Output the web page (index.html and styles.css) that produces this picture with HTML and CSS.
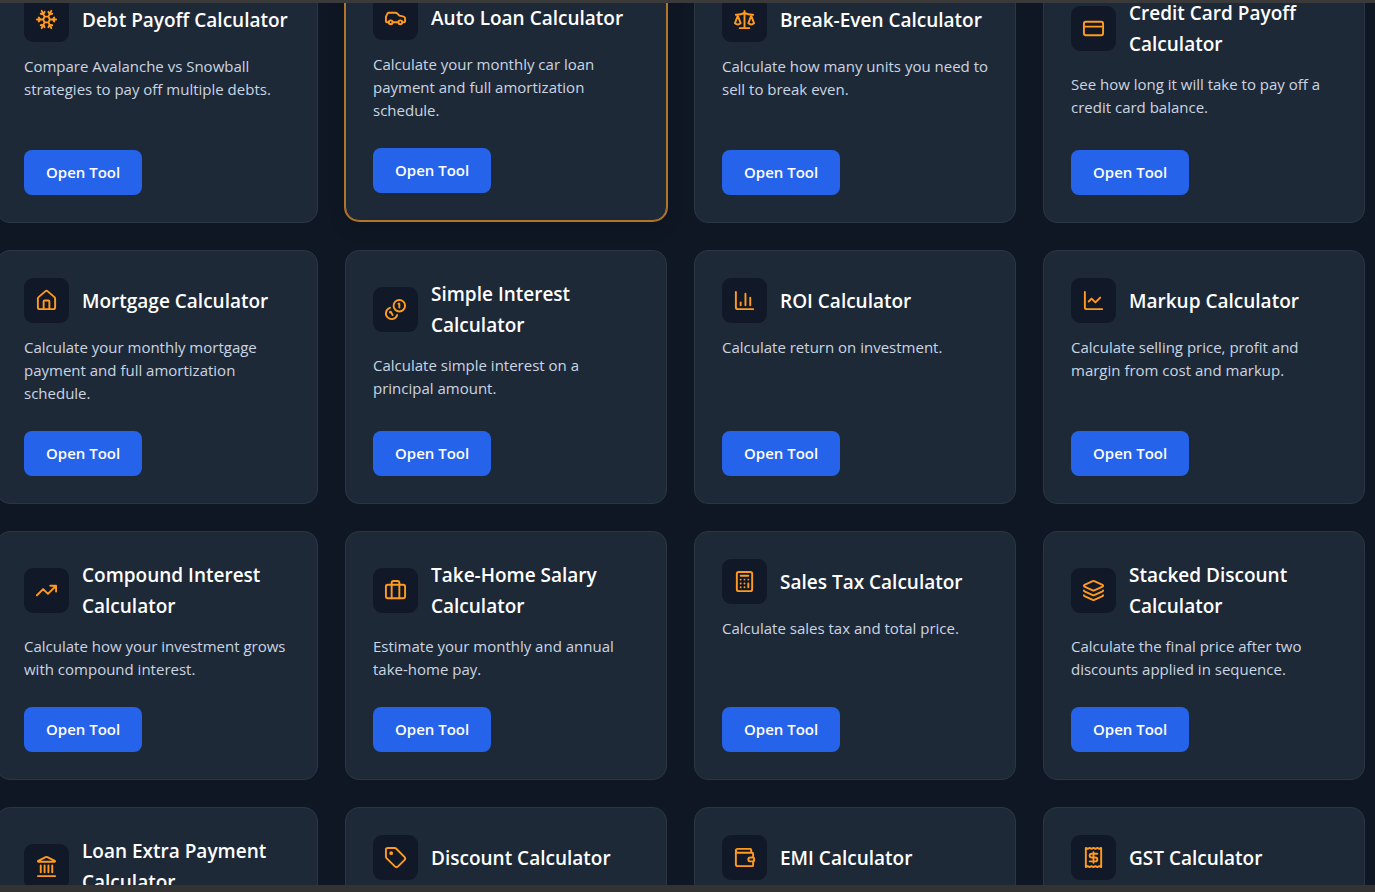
FILE: index.html
```html
<!DOCTYPE html>
<html lang="en">

<head>
    <meta charset="UTF-8">
    <meta name="viewport" content="width=device-width, initial-scale=1.0">
    <title>Financial Calculators</title>
    <link rel="stylesheet" href="styles.css">
</head>

<body>
    <main class="viewer">
        <div class="tool-grid">

            <article class="card">
                <div class="card-head">
                    <span class="icon"><svg viewBox="0 0 24 24"><path d="m10 20-1.25-2.5L6 18M10 4 8.75 6.5 6 6M14 20l1.25-2.5L18 18M14 4l1.25 2.5L18 6M17 21l-3-6h-4M17 3l-3 6 1.5 3M2 12h6.5L10 9M20 10l-1.5 2 1.5 2M22 12h-6.5L14 15M4 10l1.5 2L4 14M7 21l3-6-1.5-3M7 3l3 6h4"/></svg></span>
                    <h3>Debt Payoff Calculator</h3>
                </div>
                <p>Compare Avalanche vs Snowball strategies to pay off multiple debts.</p>
                <a href="#" class="btn">Open Tool</a>
            </article>

            <article class="card active">
                <div class="card-head">
                    <span class="icon"><svg viewBox="0 0 24 24"><path d="M19 17h2c.6 0 1-.4 1-1v-3c0-.9-.7-1.7-1.5-1.9C18.7 10.6 16 10 16 10s-1.3-1.4-2.2-2.3c-.5-.4-1.1-.7-1.8-.7H5c-.6 0-1.1.4-1.4.9l-1.4 2.9A3.7 3.7 0 0 0 2 12v4c0 .6.4 1 1 1h2M9 17h6"/><circle cx="7" cy="17" r="2"/><circle cx="17" cy="17" r="2"/></svg></span>
                    <h3>Auto Loan Calculator</h3>
                </div>
                <p>Calculate your monthly car loan payment and full amortization schedule.</p>
                <a href="#" class="btn">Open Tool</a>
            </article>

            <article class="card">
                <div class="card-head">
                    <span class="icon"><svg viewBox="0 0 24 24"><path d="M12 3v18M19 8l3 8a5 5 0 0 1-6 0zV7M3 7h1a17 17 0 0 0 8-2 17 17 0 0 0 8 2h1M5 8l3 8a5 5 0 0 1-6 0zV7M7 21h10"/></svg></span>
                    <h3>Break-Even Calculator</h3>
                </div>
                <p>Calculate how many units you need to sell to break even.</p>
                <a href="#" class="btn">Open Tool</a>
            </article>

            <article class="card">
                <div class="card-head">
                    <span class="icon"><svg viewBox="0 0 24 24"><rect x="2" y="5" width="20" height="14" rx="2"/><path d="M2 10h20"/></svg></span>
                    <h3>Credit Card Payoff Calculator</h3>
                </div>
                <p>See how long it will take to pay off a credit card balance.</p>
                <a href="#" class="btn">Open Tool</a>
            </article>

            <article class="card">
                <div class="card-head">
                    <span class="icon"><svg viewBox="0 0 24 24"><path d="M15 21v-8a1 1 0 0 0-1-1h-4a1 1 0 0 0-1 1v8"/><path d="M3 10a2 2 0 0 1 .709-1.528l7-6a2 2 0 0 1 2.582 0l7 6A2 2 0 0 1 21 10v9a2 2 0 0 1-2 2H5a2 2 0 0 1-2-2z"/></svg></span>
                    <h3>Mortgage Calculator</h3>
                </div>
                <p>Calculate your monthly mortgage payment and full amortization schedule.</p>
                <a href="#" class="btn">Open Tool</a>
            </article>

            <article class="card">
                <div class="card-head">
                    <span class="icon"><svg viewBox="0 0 24 24"><path d="M13.744 17.736a6 6 0 1 1-7.48-7.48M15 6h1v4M6.134 14.768l.866-.5 2 3.464"/><circle cx="16" cy="8" r="6"/></svg></span>
                    <h3>Simple Interest Calculator</h3>
                </div>
                <p>Calculate simple interest on a principal amount.</p>
                <a href="#" class="btn">Open Tool</a>
            </article>

            <article class="card">
                <div class="card-head">
                    <span class="icon"><svg viewBox="0 0 24 24"><path d="M3 3v16a2 2 0 0 0 2 2h16M8 17v-3M13 17V5M18 17V9"/></svg></span>
                    <h3>ROI Calculator</h3>
                </div>
                <p>Calculate return on investment.</p>
                <a href="#" class="btn">Open Tool</a>
            </article>

            <article class="card">
                <div class="card-head">
                    <span class="icon"><svg viewBox="0 0 24 24"><path d="M3 3v16a2 2 0 0 0 2 2h16M19 9l-5 5-4-4-3 3"/></svg></span>
                    <h3>Markup Calculator</h3>
                </div>
                <p>Calculate selling price, profit and margin from cost and markup.</p>
                <a href="#" class="btn">Open Tool</a>
            </article>

            <article class="card">
                <div class="card-head">
                    <span class="icon"><svg viewBox="0 0 24 24"><path d="M16 7h6v6M22 7l-8.5 8.5-5-5L2 17"/></svg></span>
                    <h3>Compound Interest Calculator</h3>
                </div>
                <p>Calculate how your investment grows with compound interest.</p>
                <a href="#" class="btn">Open Tool</a>
            </article>

            <article class="card">
                <div class="card-head">
                    <span class="icon"><svg viewBox="0 0 24 24"><path d="M16 20V4a2 2 0 0 0-2-2h-4a2 2 0 0 0-2 2v16"/><rect x="2" y="6" width="20" height="14" rx="2"/></svg></span>
                    <h3>Take-Home Salary Calculator</h3>
                </div>
                <p>Estimate your monthly and annual take-home pay.</p>
                <a href="#" class="btn">Open Tool</a>
            </article>

            <article class="card">
                <div class="card-head">
                    <span class="icon"><svg viewBox="0 0 24 24"><rect x="4" y="2" width="16" height="20" rx="2"/><path d="M8 6h8M16 14v4M16 10h.01M12 10h.01M8 10h.01M12 14h.01M8 14h.01M12 18h.01M8 18h.01"/></svg></span>
                    <h3>Sales Tax Calculator</h3>
                </div>
                <p>Calculate sales tax and total price.</p>
                <a href="#" class="btn">Open Tool</a>
            </article>

            <article class="card">
                <div class="card-head">
                    <span class="icon"><svg viewBox="0 0 24 24"><path d="M12.83 2.18a2 2 0 0 0-1.66 0L2.6 6.08a1 1 0 0 0 0 1.83l8.58 3.91a2 2 0 0 0 1.66 0l8.58-3.9a1 1 0 0 0 0-1.83z"/><path d="M2 12a1 1 0 0 0 .58.91l8.6 3.91a2 2 0 0 0 1.65 0l8.58-3.9A1 1 0 0 0 22 12"/><path d="M2 17a1 1 0 0 0 .58.91l8.6 3.91a2 2 0 0 0 1.65 0l8.58-3.9A1 1 0 0 0 22 17"/></svg></span>
                    <h3>Stacked Discount Calculator</h3>
                </div>
                <p>Calculate the final price after two discounts applied in sequence.</p>
                <a href="#" class="btn">Open Tool</a>
            </article>

            <article class="card">
                <div class="card-head">
                    <span class="icon"><svg viewBox="0 0 24 24"><path d="M11.119 2.205a2 2 0 0 1 1.762 0l7.84 3.846A.5.5 0 0 1 20.5 7h-17a.5.5 0 0 1-.22-.949zM6 18v-7M10 18v-7M14 18v-7M18 18v-7M3 22h18"/></svg></span>
                    <h3>Loan Extra Payment Calculator</h3>
                </div>
            </article>

            <article class="card">
                <div class="card-head">
                    <span class="icon"><svg viewBox="0 0 24 24"><path d="M12.586 2.586A2 2 0 0 0 11.172 2H4a2 2 0 0 0-2 2v7.172a2 2 0 0 0 .586 1.414l8.704 8.704a2.426 2.426 0 0 0 3.42 0l6.58-6.58a2.426 2.426 0 0 0 0-3.42z"/><circle cx="7.5" cy="7.5" r="1"/></svg></span>
                    <h3>Discount Calculator</h3>
                </div>
            </article>

            <article class="card">
                <div class="card-head">
                    <span class="icon"><svg viewBox="0 0 24 24"><path d="M19 7V4a1 1 0 0 0-1-1H5a2 2 0 0 0 0 4h15a1 1 0 0 1 1 1v4h-3a2 2 0 0 0 0 4h3a1 1 0 0 0 1-1v-2a1 1 0 0 0-1-1"/><path d="M3 5v14a2 2 0 0 0 2 2h15a1 1 0 0 0 1-1v-4"/></svg></span>
                    <h3>EMI Calculator</h3>
                </div>
            </article>

            <article class="card">
                <div class="card-head">
                    <span class="icon"><svg viewBox="0 0 24 24"><path d="M4 2v20l2-1 2 1 2-1 2 1 2-1 2 1 2-1 2 1V2l-2 1-2-1-2 1-2-1-2 1-2-1-2 1Z"/><path d="M16 8h-6a2 2 0 1 0 0 4h4a2 2 0 1 1 0 4H8M12 17.5v-11"/></svg></span>
                    <h3>GST Calculator</h3>
                </div>
            </article>

        </div>
    </main>
</body>

</html>
```
FILE: styles.css
```css
* {
    margin: 0;
    padding: 0;
    box-sizing: border-box;
}

body {
    font-family: "Segoe UI", "Open Sans", "Noto Sans", sans-serif;
    background-color: #0f1724;
    color: #fff;
}

/* Visible part of the scrolled page, between the two grey bars */
.viewer {
    height: 100vh;
    overflow: hidden;
    border-top: 3px solid #3a3a3a;
    border-bottom: 7px solid #333;
}

.tool-grid {
    display: grid;
    grid-template-columns: repeat(4, 1fr);
    gap: 27px;
    margin: -34px 10px 0 -4px;
}

/* Cards */
.card {
    display: flex;
    flex-direction: column;
    align-items: flex-start;
    min-height: 249px;
    padding: 27px;
    background-color: #1e2938;
    border: 1px solid #2b3644;
    border-radius: 14px;
}

.card.active {
    border-color: #b0742a;
    box-shadow: 0 0 0 1px #b0742a, 0 6px 18px rgba(0, 0, 0, 0.15);
    transform: translateY(-2px);
}

.card-head {
    display: flex;
    align-items: center;
    gap: 13px;
    margin-bottom: 13px;
}

.icon {
    display: flex;
    flex-shrink: 0;
    align-items: center;
    justify-content: center;
    width: 45px;
    height: 45px;
    background-color: #111827;
    border-radius: 9px;
}

.icon svg {
    width: 23px;
    height: 23px;
    fill: none;
    stroke: #ff9a1f;
    stroke-width: 2;
    stroke-linecap: round;
    stroke-linejoin: round;
}

.card h3 {
    padding-top: 1px;
    font-size: 19px;
    font-weight: 600;
    line-height: 31px;
}

.card p {
    margin-bottom: 26px;
    color: #cbd5e1;
    font-size: 15px;
    line-height: 23px;
}

/* Button */
.btn {
    margin-top: auto;
    padding: 0 22px;
    background-color: #2563eb;
    border-radius: 8px;
    color: #fff;
    font-size: 15px;
    font-weight: 600;
    line-height: 45px;
    text-decoration: none;
}

.btn:hover {
    background-color: #1d4ed8;
}
```
